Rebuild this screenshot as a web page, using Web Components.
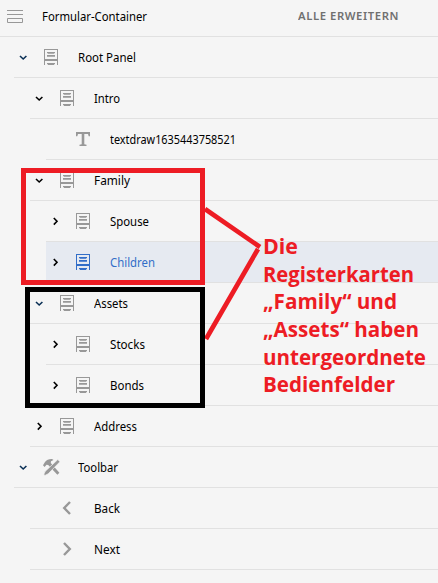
<!DOCTYPE html>
<html lang="de">
<head>
<meta charset="utf-8">
<title>Formular-Container</title>
<style>
html,body{margin:0;height:100%;overflow:hidden;background:#f5f5f5}
body{font:12.5px/20px "Noto Sans","Open Sans",sans-serif;color:#000}
</style>
</head>
<body>
<form-outline></form-outline>
<script>
// Text set to an exact advance width.
class FitText extends HTMLElement {
  connectedCallback() {
    const root = this.attachShadow({mode: 'open'});
    root.innerHTML = `<style>:host{display:block;white-space:nowrap}span{display:inline-block;transform-origin:0 50%}</style><span><slot></slot></span>`;
    const s = root.querySelector('span');
    const w = s.getBoundingClientRect().width;
    if (w) s.style.transform = `scaleX(${Number(this.getAttribute('width')) / w})`;
  }
}
const glyphs = {
  container: '<path d="M0 .5h16M0 4.5h16M.5 8.5h15v4H.5z" fill="none" stroke="currentColor"/>',
  panel: '<path d="M1 0h14v16h-1v-4H2v4H1zM2 1v9h12V1z" fill-rule="evenodd"/><path d="M4 3h8v1.3H4zM4 6h8v1.7H4zM5 3.8h6v1H5zM4 14h8v1.2H4zM5 15h6v1H5z"/>',
  text: '<path d="M1 1h14v4.3h-1.3L13 3H9.3v10.2l2.2.6V15h-7v-1.2l2.2-.6V3H3l-.7 2.3H1z"/>',
  tools: '<path d="M0 6.2 2 3.1C3.4 1 6 0 9 .1L10.5 1 8 2.3 7.8 4 16.4 13.8 14.4 15.8 5.2 6.1 3.5 5.8 1.6 8z"/><path d="M14.8.6 17 2.7 5.2 14.8 2 16.4.8 15.2 2.3 12.2z" stroke="#f5f5f5" stroke-width=".7"/>',
  back: '<path d="M11 2 5.2 8 11 14" fill="none" stroke="currentColor" stroke-width="2.4"/>',
  next: '<path d="M5 2 10.8 8 5 14" fill="none" stroke="currentColor" stroke-width="2.4"/>'
};
class OutlineIcon extends HTMLElement {
  connectedCallback() {
    this.attachShadow({mode: 'open'}).innerHTML = `<style>:host{display:block;width:17px;height:16px}svg{display:block;overflow:visible}</style><svg width="17" height="16" fill="currentColor">${glyphs[this.getAttribute('name')]}</svg>`;
  }
}
class OutlineRow extends HTMLElement {
  connectedCallback() {
    const a = n => this.getAttribute(n);
    const arrow = {open: 'M1 3 4.2 6 7.4 3', closed: 'M2.8 1 6 4.3 2.8 7.6'}[a('state')];
    this.attachShadow({mode: 'open'}).innerHTML = `<style>
      :host{display:grid;grid-template-columns:29px 35px 1fr;align-items:center;height:41px;box-sizing:border-box;border-bottom:1px solid #e1e1e1;margin-left:${a('indent')}px}
      :host([selected]){background:#e6eaf1;color:#326ec8}
      .arrow{display:block;margin-left:5px;margin-top:1px;color:${a('tone') || '#000'}}
      outline-icon{color:#989898}
      :host([selected]) outline-icon{color:#326ec8}
      fit-text{margin-top:2px}
    </style>
    <svg class="arrow" width="9" height="9"><path d="${arrow || ''}" fill="none" stroke="currentColor" stroke-width="1.6"/></svg>
    <outline-icon name="${a('icon')}"></outline-icon>
    <fit-text width="${a('width')}"><slot></slot></fit-text>`;
  }
}
class OutlineHeader extends HTMLElement {
  connectedCallback() {
    this.attachShadow({mode: 'open'}).innerHTML = `<style>
      :host{display:grid;grid-template-columns:35px 256px 1fr;height:37px;box-sizing:border-box;border-bottom:1px solid #e1e1e1;align-items:start;padding:7px 0 0 7px}
      outline-icon{color:#989898;margin-top:3px}
      .action{font-size:11.5px;font-weight:600;letter-spacing:.6px;color:#707070;margin-top:-1px}
    </style><outline-icon name="container"></outline-icon><fit-text width="105">Formular-Container</fit-text><fit-text class="action" width="101">ALLE ERWEITERN</fit-text>`;
  }
}
// Frames, connecting lines and caption laid over the outline.
class OutlineNote extends HTMLElement {
  connectedCallback() {
    this.attachShadow({mode: 'open'}).innerHTML = `<style>
      :host{position:absolute;inset:0;pointer-events:none;color:#ed1c24}
      svg{display:block}
      .caption{position:absolute;left:262.5px;top:232px;font:700 21.7px/27.65px "Open Sans","Noto Sans",sans-serif}
    </style>
    <svg width="438" height="583" fill="none" stroke="#ed1c24" stroke-width="5">
      <path d="M205 209 260 247M258 249 206 339" stroke-width="4.7"/>
      <rect x="23.5" y="170.5" width="179" height="112"/>
      <rect x="27.5" y="289.5" width="175" height="116" stroke="#000"/>
    </svg>
    <div class="caption">
      <fit-text width="35">Die</fit-text><fit-text width="151">Registerkarten</fit-text>
      <fit-text width="134">„Family“ und</fit-text><fit-text width="156">„Assets“ haben</fit-text>
      <fit-text width="163">untergeordnete</fit-text><fit-text width="132">Bedienfelder</fit-text>
    </div>`;
  }
}
class FormOutline extends HTMLElement {
  connectedCallback() {
    const rows = [
      ['Root Panel', 14, 'panel', 'open', 58, '#0a2f55'], ['Intro', 30, 'panel', 'open', 26],
      ['textdraw1635443758521', 46, 'text', '', 126], ['Family', 30, 'panel', 'open', 36],
      ['Spouse', 46, 'panel', 'closed', 39], ['Children', 46, 'panel', 'closed', 45, '', 1],
      ['Assets', 30, 'panel', 'open', 34, '#0a2f55'], ['Stocks', 46, 'panel', 'closed', 35],
      ['Bonds', 46, 'panel', 'closed', 34], ['Address', 30, 'panel', 'closed', 43],
      ['Toolbar', 14, 'tools', 'open', 40, '#0a2f55'], ['Back', 30, 'back', '', 26], ['Next', 30, 'next', '', 26]
    ];
    this.attachShadow({mode: 'open'}).innerHTML = `<style>:host{display:block;position:relative;width:438px;height:583px;overflow:hidden}</style>
      <outline-header></outline-header>${rows.map(([t, i, g, s, w, c, sel]) =>
        `<outline-row indent="${i}" icon="${g}" state="${s}" width="${w}" ${c ? `tone="${c}"` : ''} ${sel ? 'selected' : ''}>${t}</outline-row>`).join('')}
      <outline-note></outline-note>`;
  }
}
customElements.define('fit-text', FitText);
customElements.define('outline-icon', OutlineIcon);
customElements.define('outline-row', OutlineRow);
customElements.define('outline-header', OutlineHeader);
customElements.define('outline-note', OutlineNote);
customElements.define('form-outline', FormOutline);
</script>
</body>
</html>
